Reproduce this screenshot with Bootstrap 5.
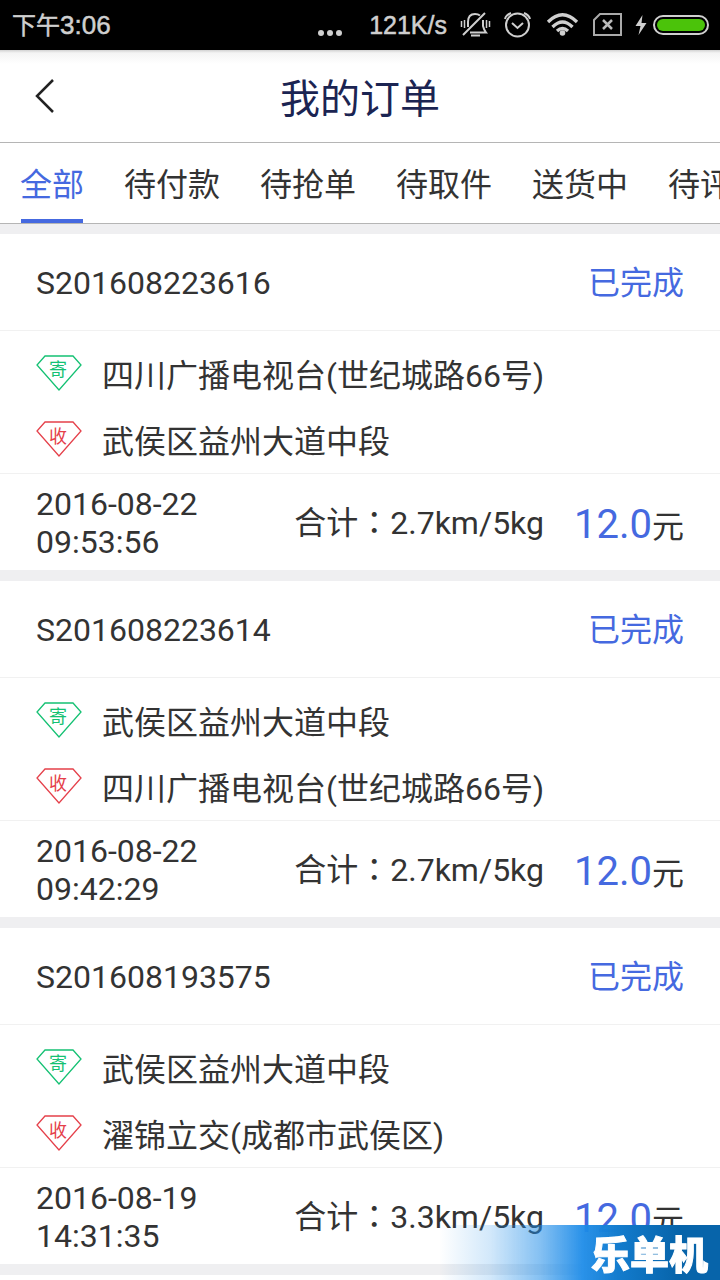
<!DOCTYPE html>
<html lang="zh-CN">
<head>
<meta charset="utf-8">
<meta name="viewport" content="width=device-width, initial-scale=1">
<title>我的订单</title>
<link href="https://cdn.jsdelivr.net/npm/bootstrap@5.3.0/dist/css/bootstrap.min.css" rel="stylesheet">
<style>
  :root { --ink: #333; --blue: #4569e0; --gap: #efeff1; }
  body { font-family: Roboto, "Noto Sans CJK SC", sans-serif; font-size: 32px; line-height: 38px; color: var(--ink); background: #fff; overflow-x: hidden; }
  a { color: inherit; text-decoration: none; }
  .statusbar { height: 50px; background: #000; color: #cfcfcf; font-family: "Liberation Sans", "Noto Sans CJK SC", sans-serif; font-size: 26px; line-height: 52px; padding: 0 11px 0 12px; -webkit-text-stroke: .5px #cfcfcf; }
  .statusbar .hanzi { font-size: 24px; }
  .statusbar .rate { font-size: 25px; margin: 0 12px 0 26px; }
  .statusbar svg { display: block; flex: none; }
  .titlebar { height: 93px; border-bottom: 1px solid #b5b5b5; background: linear-gradient(#d2d2d2, #f4f4f4 3px, #fff 14px); }
  .titlebar h1 { font-size: 40px; line-height: 48px; font-weight: 400; color: #1b2452; margin: 0; padding-top: 8px; }
  .back-btn { width: 48px; height: 48px; left: 20px; top: 22px; border: 0; background: none; padding: 0; }
  .tabs-row { height: 81px; border-bottom: 1px solid #b5b5b5; padding: 0 20px; gap: 40px; overflow: hidden; }
  .tabs-row a { height: 80px; line-height: 84px; position: relative; white-space: nowrap; flex: none; }
  .tabs-row a.current { color: var(--blue); }
  .tabs-row a.current::after { content: ""; position: absolute; left: 1px; right: 1px; bottom: 0; height: 4px; background: var(--blue); }
  .orders { background: var(--gap); padding: 10px 0 11px; }
  .order { background: #fff; }
  .order + .order { margin-top: 11px; }
  .order-head, .order-foot { min-height: 96px; padding: 2px 36px 0; }
  .order-head { min-height: 97px; border-bottom: 1px solid #f1f1f1; }
  .order-route { padding: 10px 36px 0; border-bottom: 1px solid #f1f1f1; }
  .stop { height: 66px; gap: 20px; padding-top: 4px; }
  .stop svg { width: 46px; height: 36px; flex: none; display: block; margin-bottom: 6px; }
  .stop text { font-size: 18px; text-anchor: middle; stroke: none; font-family: "Noto Sans CJK SC", sans-serif; font-weight: 400; }
  .send { stroke: #14c173; fill: #14c173; }
  .recv { stroke: #e5404a; fill: #e5404a; }
  .stop svg path { stroke-width: 1.300; }
  .state, .price { color: var(--blue); }
  .foot-sum { gap: 30px; }
  .amount { padding-top: 6px; }
  .price { font-size: 40px; }
  .brand { position: fixed; right: 0; bottom: 0; width: 280px; height: 55px; padding-right: 12px; font-family: "Noto Sans CJK SC", sans-serif; font-size: 39px; line-height: 55px; font-weight: 900; color: #fff; -webkit-text-stroke: 1px #fff; background: linear-gradient(90deg, rgba(30,140,232,0), rgba(30,140,232,.2) 18%, rgba(30,140,232,.55) 36%, rgba(30,140,232,.95) 51%, #127acb 65%, #0764aa 85%, #0764aa); }
</style>
</head>
<body>
<div class="statusbar d-flex align-items-center">
  <div class="me-auto"><span class="hanzi">下午</span>3:06</div>
  <svg width="26" height="50" fill="#cfcfcf" stroke="none"><circle cx="4" cy="33" r="3"/><circle cx="13" cy="33" r="3"/><circle cx="22" cy="33" r="3"/></svg>
  <span class="rate">121K/s</span>
  <svg width="250" height="50" viewBox="459 0 250 50" fill="none" stroke="#cfcfcf" stroke-width="2">
    <path d="M461.500 21v6M464.500 20v8M486.500 20v8M489.500 21v6" stroke-width="1.500"/>
    <path d="M463 35L485 13M468 27v-5q0-8 7-8 3 0 5 1.500M483 20v6q1 4 3 6.500H470M471 35.500h9"/>
    <circle cx="517.500" cy="25" r="11.500"/><path d="M512 23l5.500 5 5.500-5M505 19q1-4 6-6M530 19q-1-4-6-6"/>
    <path d="M548 22q14.500-14.500 29 0M552.500 27q10-10 20 0M557 31q5.500-5 11 0" stroke-width="3.300"/><circle cx="562.500" cy="33" r="2.800" fill="#cfcfcf" stroke="none"/>
    <path d="M600 14h21v21h-27V20z" stroke="#aaa"/><path d="M603 20l9 9M612 20l-9 9" stroke-width="2.500" stroke="#bbb"/>
    <path d="M642.500 15l-7 11h5l-2 9 8-12h-5z" fill="#cfcfcf" stroke="none"/>
    <rect x="654" y="16" width="54" height="18" rx="9"/><rect x="657" y="19" width="48" height="12" rx="6" fill="#4bc30a" stroke="none"/>
  </svg>
</div>

<header class="titlebar position-relative d-flex align-items-center justify-content-center">
  <button class="back-btn position-absolute" type="button" aria-label="返回"><svg class="d-block" width="48" height="48" fill="none" stroke="#222" stroke-width="2.500"><path d="M33 8L17 24l16 16"/></svg></button>
  <h1>我的订单</h1>
</header>
<nav class="tabs-row d-flex">
  <a class="current" href="#" aria-current="page">全部</a><a href="#">待付款</a><a href="#">待抢单</a><a href="#">待取件</a><a href="#">送货中</a><a href="#">待评价</a>
</nav>

<main class="orders">
  <article class="order">
    <div class="order-head d-flex align-items-center justify-content-between"><span>S201608223616</span><span class="state">已完成</span></div>
    <div class="order-route">
      <div class="stop d-flex align-items-center"><svg class="send" viewBox="0 0 46 36"><path fill="none" d="M9 1h28l8 9-22 25L1 10z"/><text x="22" y="21">寄</text></svg><span>四川广播电视台(世纪城路66号)</span></div>
      <div class="stop d-flex align-items-center"><svg class="recv" viewBox="0 0 46 36"><path fill="none" d="M9 1h28l8 9-22 25L1 10z"/><text x="22" y="22">收</text></svg><span>武侯区益州大道中段</span></div>
    </div>
    <div class="order-foot d-flex align-items-center justify-content-between">
      <time datetime="2016-08-22T09:53:56">2016-08-22<br>09:53:56</time>
      <div class="foot-sum d-flex align-items-center"><span>合计<span lang="zh-TW">：</span>2.7km/5kg</span><span class="amount"><span class="price">12.0</span>元</span></div>
    </div>
  </article>
  <article class="order">
    <div class="order-head d-flex align-items-center justify-content-between"><span>S201608223614</span><span class="state">已完成</span></div>
    <div class="order-route">
      <div class="stop d-flex align-items-center"><svg class="send" viewBox="0 0 46 36"><path fill="none" d="M9 1h28l8 9-22 25L1 10z"/><text x="22" y="21">寄</text></svg><span>武侯区益州大道中段</span></div>
      <div class="stop d-flex align-items-center"><svg class="recv" viewBox="0 0 46 36"><path fill="none" d="M9 1h28l8 9-22 25L1 10z"/><text x="22" y="22">收</text></svg><span>四川广播电视台(世纪城路66号)</span></div>
    </div>
    <div class="order-foot d-flex align-items-center justify-content-between">
      <time datetime="2016-08-22T09:42:29">2016-08-22<br>09:42:29</time>
      <div class="foot-sum d-flex align-items-center"><span>合计<span lang="zh-TW">：</span>2.7km/5kg</span><span class="amount"><span class="price">12.0</span>元</span></div>
    </div>
  </article>
  <article class="order">
    <div class="order-head d-flex align-items-center justify-content-between"><span>S201608193575</span><span class="state">已完成</span></div>
    <div class="order-route">
      <div class="stop d-flex align-items-center"><svg class="send" viewBox="0 0 46 36"><path fill="none" d="M9 1h28l8 9-22 25L1 10z"/><text x="22" y="21">寄</text></svg><span>武侯区益州大道中段</span></div>
      <div class="stop d-flex align-items-center"><svg class="recv" viewBox="0 0 46 36"><path fill="none" d="M9 1h28l8 9-22 25L1 10z"/><text x="22" y="22">收</text></svg><span>濯锦立交(成都市武侯区)</span></div>
    </div>
    <div class="order-foot d-flex align-items-center justify-content-between">
      <time datetime="2016-08-19T14:31:35">2016-08-19<br>14:31:35</time>
      <div class="foot-sum d-flex align-items-center"><span>合计<span lang="zh-TW">：</span>3.3km/5kg</span><span class="amount"><span class="price">12.0</span>元</span></div>
    </div>
  </article>
</main>
<div class="brand text-end">乐单机</div>
<script src="https://cdn.jsdelivr.net/npm/bootstrap@5.3.0/dist/js/bootstrap.bundle.min.js"></script>
</body>
</html>
